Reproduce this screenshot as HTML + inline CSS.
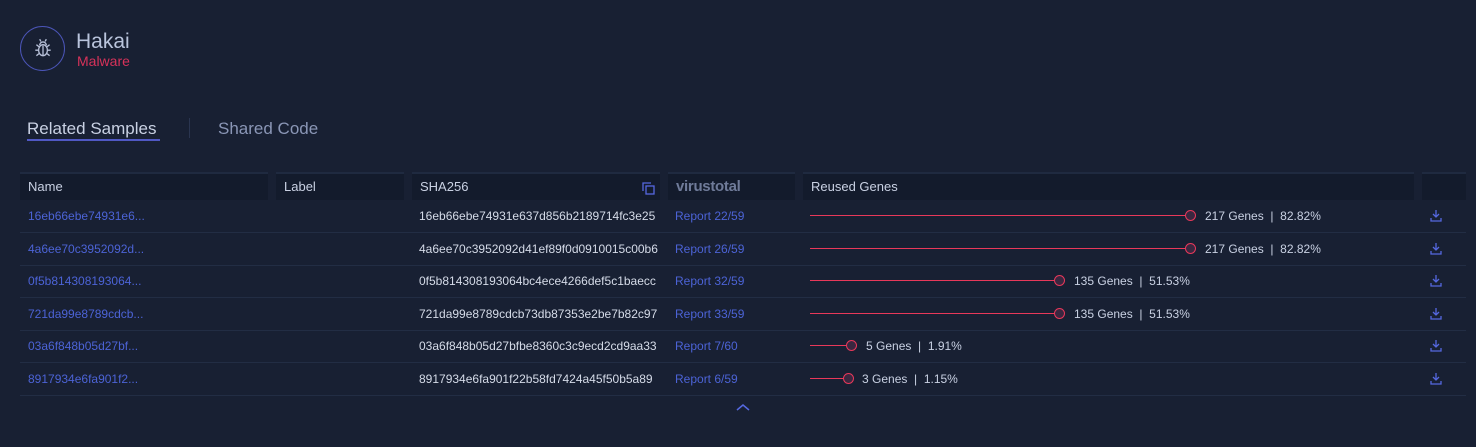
<!DOCTYPE html>
<html><head><style>
body{margin:0;width:1476px;height:447px;background:#182033;font-family:"Liberation Sans","DejaVu Sans",sans-serif;overflow:hidden;position:relative;color:#c9d1e3}
.a{position:absolute}
.hc{position:absolute;top:172px;height:28px;background:#131b2c;border-top:2px solid #1f2a40;box-sizing:border-box;font-size:13px;color:#c9d1e3;line-height:26px;padding-left:8px}
.row{position:absolute;left:20px;width:1446px;height:32px;border-bottom:1px solid #222d44;font-size:12px}
.row span{position:absolute;top:0;line-height:32px;white-space:nowrap;overflow:hidden}
.nm{left:8px;color:#4c63d6}
.sh{left:399px;width:242px;color:#d5dbe8}
.vt{left:655px;color:#4c63d6}
.ln{position:absolute;top:15px;left:790px;height:1px;background:#e8385a}
.dot{position:absolute;top:10px;width:9px;height:9px;border:1.5px solid #e8385a;border-radius:50%;background:#3a2740}
.gt{color:#c9d1e3}
</style></head><body>
<div class="a" style="left:20px;top:26px;width:45px;height:45px;border:1.3px solid #4b55b8;border-radius:50%;box-sizing:border-box"></div>
<svg class="a" style="left:32px;top:37px" width="22" height="22" viewBox="0 0 20 20" fill="none" stroke="#b7c0d8" stroke-width="1.2"><ellipse cx="10" cy="12" rx="4" ry="5"/><path d="M7 7.5a3 3 0 0 1 6 0M10 8v9M6 12H3M14 12h3M6.5 9L4 7M13.5 9L16 7M6.5 15L4 17M13.5 15L16 17M8 4L7 2M12 4l1-2"/></svg>
<div class="a" style="left:76px;top:30px;font-size:21px;color:#b9c4dc">Hakai</div>
<div class="a" style="left:77px;top:53px;font-size:14px;color:#d6325a">Malware</div>
<div class="a" style="left:27px;top:119px;font-size:17px;color:#c9d1e3">Related Samples</div>
<div class="a" style="left:27px;top:139px;width:133px;height:2px;background:#5058c4"></div>
<div class="a" style="left:189px;top:118px;width:1px;height:20px;background:#2a3550"></div>
<div class="a" style="left:218px;top:119px;font-size:17px;color:#8a96b6">Shared Code</div>

<div class="hc" style="left:20px;width:248px">Name</div>
<div class="hc" style="left:276px;width:128px">Label</div>
<div class="hc" style="left:412px;width:248px">SHA256
<svg class="a" style="left:230px;top:8px" width="13" height="13" viewBox="0 0 13 13" fill="none" stroke="#5568e0" stroke-width="1.3"><path d="M1 9V1h8"/><rect x="4" y="4" width="8" height="8"/></svg></div>
<div class="hc" style="left:668px;width:127px;font-weight:bold;font-size:15px;color:#6f7b99;letter-spacing:-0.3px">virustotal</div>
<div class="hc" style="left:803px;width:611px">Reused Genes</div>
<div class="hc" style="left:1422px;width:44px"></div>

<div class="row" style="top:200px"><span class="nm">16eb66ebe74931e6...</span><span class="sh">16eb66ebe74931e637d856b2189714fc3e25</span><span class="vt">Report 22/59</span><div class="ln" style="width:380px"></div><div class="dot" style="left:1165px"></div><span class="gt" style="left:1185px">217 Genes &nbsp;|&nbsp; 82.82%</span><svg class="a" style="left:1410px;top:9px" width="12" height="13" viewBox="0 0 12 13" fill="none" stroke="#5568e0" stroke-width="1.3"><path d="M6 1v7M3 5l3 3 3-3M1 9v3h10V9"/></svg></div>
<div class="row" style="top:233px"><span class="nm">4a6ee70c3952092d...</span><span class="sh">4a6ee70c3952092d41ef89f0d0910015c00b6</span><span class="vt">Report 26/59</span><div class="ln" style="width:380px"></div><div class="dot" style="left:1165px"></div><span class="gt" style="left:1185px">217 Genes &nbsp;|&nbsp; 82.82%</span><svg class="a" style="left:1410px;top:9px" width="12" height="13" viewBox="0 0 12 13" fill="none" stroke="#5568e0" stroke-width="1.3"><path d="M6 1v7M3 5l3 3 3-3M1 9v3h10V9"/></svg></div>
<div class="row" style="top:265px"><span class="nm">0f5b814308193064...</span><span class="sh">0f5b814308193064bc4ece4266def5c1baecc</span><span class="vt">Report 32/59</span><div class="ln" style="width:250px"></div><div class="dot" style="left:1034px"></div><span class="gt" style="left:1054px">135 Genes &nbsp;|&nbsp; 51.53%</span><svg class="a" style="left:1410px;top:9px" width="12" height="13" viewBox="0 0 12 13" fill="none" stroke="#5568e0" stroke-width="1.3"><path d="M6 1v7M3 5l3 3 3-3M1 9v3h10V9"/></svg></div>
<div class="row" style="top:298px"><span class="nm">721da99e8789cdcb...</span><span class="sh">721da99e8789cdcb73db87353e2be7b82c97</span><span class="vt">Report 33/59</span><div class="ln" style="width:250px"></div><div class="dot" style="left:1034px"></div><span class="gt" style="left:1054px">135 Genes &nbsp;|&nbsp; 51.53%</span><svg class="a" style="left:1410px;top:9px" width="12" height="13" viewBox="0 0 12 13" fill="none" stroke="#5568e0" stroke-width="1.3"><path d="M6 1v7M3 5l3 3 3-3M1 9v3h10V9"/></svg></div>
<div class="row" style="top:330px"><span class="nm">03a6f848b05d27bf...</span><span class="sh">03a6f848b05d27bfbe8360c3c9ecd2cd9aa33</span><span class="vt">Report 7/60</span><div class="ln" style="width:42px"></div><div class="dot" style="left:826px"></div><span class="gt" style="left:846px">5 Genes &nbsp;|&nbsp; 1.91%</span><svg class="a" style="left:1410px;top:9px" width="12" height="13" viewBox="0 0 12 13" fill="none" stroke="#5568e0" stroke-width="1.3"><path d="M6 1v7M3 5l3 3 3-3M1 9v3h10V9"/></svg></div>
<div class="row" style="top:363px"><span class="nm">8917934e6fa901f2...</span><span class="sh">8917934e6fa901f22b58fd7424a45f50b5a89</span><span class="vt">Report 6/59</span><div class="ln" style="width:38px"></div><div class="dot" style="left:823px"></div><span class="gt" style="left:842px">3 Genes &nbsp;|&nbsp; 1.15%</span><svg class="a" style="left:1410px;top:9px" width="12" height="13" viewBox="0 0 12 13" fill="none" stroke="#5568e0" stroke-width="1.3"><path d="M6 1v7M3 5l3 3 3-3M1 9v3h10V9"/></svg></div>
<svg class="a" style="left:736px;top:403px" width="14" height="9" viewBox="0 0 14 9" fill="none" stroke="#5568e0" stroke-width="1.5"><path d="M1 7l6-5 6 5"/></svg>
</body></html>
